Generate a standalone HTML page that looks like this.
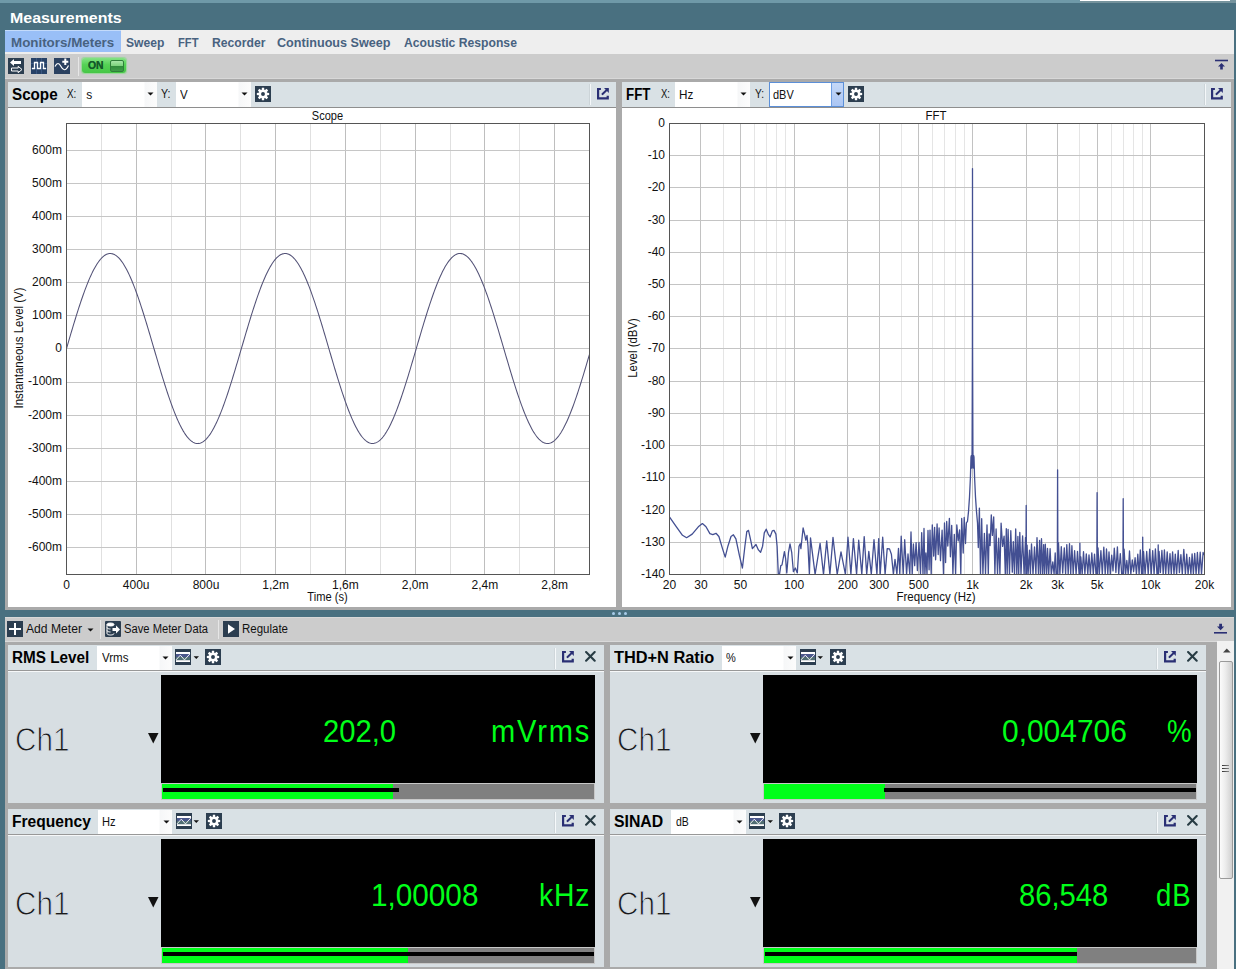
<!DOCTYPE html>
<html><head><meta charset="utf-8"><title>Measurements</title>
<style>
html,body{margin:0;padding:0}
body{width:1236px;height:969px;overflow:hidden;background:#497080;position:relative;font-family:"Liberation Sans",sans-serif}
.b{position:absolute;display:block}
.t{position:absolute;white-space:nowrap;transform-origin:0 50%}
svg text{font-family:"Liberation Sans",sans-serif}
</style></head><body>
<div class="b" style="left:0px;top:0px;width:1080px;height:3px;background:#6f99a8;"></div>
<div class="b" style="left:1080px;top:0px;width:156px;height:3px;background:#75939d;"></div>
<div class="b" style="left:1080px;top:0px;width:150px;height:1px;background:#ffffff;"></div>
<div class="t" style="left:9.70px;top:9.68px;font-size:15.5px;line-height:15.5px;font-weight:bold;color:#fff;transform:scaleX(1.0282);">Measurements</div>
<div class="b" style="left:5px;top:30px;width:1229px;height:24px;background:#eeeeee;"></div>
<div class="b" style="left:5px;top:30px;width:115.5px;height:22px;background:#99bff7;border-top:1px solid #c4dbfb;box-sizing:border-box;"></div>
<div class="t" style="left:10.50px;top:35.67px;font-size:13.5px;line-height:13.5px;font-weight:bold;color:#486280;transform:scaleX(0.9899);">Monitors/Meters</div>
<div class="t" style="left:126.30px;top:35.67px;font-size:13.5px;line-height:13.5px;font-weight:bold;color:#486280;transform:scaleX(0.8979);">Sweep</div>
<div class="t" style="left:177.90px;top:35.67px;font-size:13.5px;line-height:13.5px;font-weight:bold;color:#486280;transform:scaleX(0.8287);">FFT</div>
<div class="t" style="left:211.50px;top:35.67px;font-size:13.5px;line-height:13.5px;font-weight:bold;color:#486280;transform:scaleX(0.9009);">Recorder</div>
<div class="t" style="left:277.40px;top:35.67px;font-size:13.5px;line-height:13.5px;font-weight:bold;color:#486280;transform:scaleX(0.9342);">Continuous Sweep</div>
<div class="t" style="left:404.30px;top:35.67px;font-size:13.5px;line-height:13.5px;font-weight:bold;color:#486280;transform:scaleX(0.9012);">Acoustic Response</div>
<div class="b" style="left:5px;top:54px;width:1229px;height:25px;background:#cccccc;"></div>
<div class="b" style="left:5px;top:78px;width:1229px;height:1px;background:#d8d8d8;"></div>
<svg class="b" style="left:8px;top:58px;" width="16" height="16" viewBox="0 0 16 16"><rect width="16" height="16" fill="#2c3e50"/><path d="M2 4.5 L6 1 L6 3 L13 3 L13 6 L6 6 L6 8 Z" fill="#fff"/><path d="M14 11.5 L10.2 8.3 L10.2 10 L3.5 10 L3.5 13 L10.2 13 L10.2 14.7 Z" fill="none" stroke="#fff" stroke-width="1"/></svg>
<svg class="b" style="left:31px;top:58px;" width="16" height="16" viewBox="0 0 16 16"><rect width="16" height="16" fill="#274166"/><path d="M0 5.5H16M0 10.5H16M5.5 0V16M10.5 0V16" stroke="#3a5680" stroke-width="1" fill="none"/><path d="M1 10.5 H3.5 V4.5 H6.5 V10.5 H9.5 V4.5 H12.5 V10.5 H15" stroke="#fff" stroke-width="1.3" fill="none"/></svg>
<svg class="b" style="left:54px;top:58px;" width="16" height="16" viewBox="0 0 16 16"><rect width="16" height="16" fill="#2b4160"/><path d="M1 8.5 C3 4.5 5 4.5 7 8.5 S 11.5 13.5 14.5 7.5" stroke="#fff" stroke-width="1.2" fill="none"/><path d="M8.3 3.7 H14.3 M11.3 0.6 V6.9" stroke="#fff" stroke-width="2" fill="none"/></svg>
<div class="b" style="left:78px;top:57px;width:1px;height:19px;background:#e6e6e6;"></div>
<div class="b" style="left:82px;top:58px;width:44px;height:15px;border-radius:3px;background:linear-gradient(#84e384,#55d155 45%,#46c646);box-shadow:0 0 1px 0.5px rgba(120,220,120,.6);"></div>
<div class="b" style="left:110px;top:60px;width:14px;height:11.5px;border-radius:2px;background:linear-gradient(#a6e6a6 0%,#7fd37f 45%,#2f8a3a 50%,#3f9d48 100%);border:1px solid #2f7f3a;box-sizing:border-box;"></div>
<div class="t" style="left:88.20px;top:60.31px;font-size:10.5px;line-height:10.5px;font-weight:bold;color:#14592a;transform:scaleX(0.9905);text-shadow:0 0 0.6px #14592a;">ON</div>
<svg class="b" style="left:1215px;top:59px;" width="14" height="12" viewBox="0 0 14 12"><path d="M0 1.5H13" stroke="#2a2f74" stroke-width="1.6"/><path d="M6.5 4 L10 7.5 H7.8 V10.5 H5.2 V7.5 H3 Z" fill="#2a2f74"/></svg>
<div class="b" style="left:5px;top:79px;width:1229px;height:531px;background:#aaaaaa;"></div>
<div class="b" style="left:8px;top:82px;width:608px;height:25px;background:#d9e1e5;"></div>
<div class="b" style="left:8px;top:107px;width:608px;height:500px;background:#ffffff;border-top:1px solid #8e8e8e;box-sizing:border-box;"></div>
<div class="t" style="left:12.00px;top:86.66px;font-size:16px;line-height:16.0px;font-weight:bold;color:#000;transform:scaleX(0.9498);">Scope</div>
<div class="t" style="left:67.20px;top:87.84px;font-size:12px;line-height:12.0px;font-weight:normal;color:#111;transform:scaleX(0.8202);">X:</div>
<div class="b" style="left:82px;top:82px;width:74.5px;height:25px;background:linear-gradient(90deg,#fff 0,#fff calc(100% - 13px),#f6f7f8 calc(100% - 12px),#fcfcfc 100%);"></div>
<div class="t" style="left:86.30px;top:88.64px;font-size:12px;line-height:12.0px;font-weight:normal;color:#111;transform:scaleX(1.0000);">s</div>
<svg class="b" style="left:146.75px;top:92.0px;" width="7" height="4" viewBox="0 0 7 4"><path d="M0.5 0.5 H6.5 L3.5 3.5 Z" fill="#111"/></svg>
<div class="t" style="left:161.00px;top:87.84px;font-size:12px;line-height:12.0px;font-weight:normal;color:#111;transform:scaleX(0.8898);">Y:</div>
<div class="b" style="left:176px;top:82px;width:75px;height:25px;background:linear-gradient(90deg,#fff 0,#fff calc(100% - 13px),#f6f7f8 calc(100% - 12px),#fcfcfc 100%);"></div>
<div class="t" style="left:180.00px;top:88.64px;font-size:12px;line-height:12.0px;font-weight:normal;color:#111;transform:scaleX(0.9620);">V</div>
<svg class="b" style="left:241.25px;top:92.0px;" width="7" height="4" viewBox="0 0 7 4"><path d="M0.5 0.5 H6.5 L3.5 3.5 Z" fill="#111"/></svg>
<svg class="b" style="left:255px;top:86px;" width="16" height="16" viewBox="0 0 16 16"><rect width="16" height="16" fill="#2c3e50"/><g transform="translate(8,8)" fill="#fff" shape-rendering="geometricPrecision"><path d="M-1.45 -3.4 L-1.1 -6.15 H1.1 L1.45 -3.4 Z" transform="rotate(0)" /><path d="M-1.45 -3.4 L-1.1 -6.15 H1.1 L1.45 -3.4 Z" transform="rotate(45)" /><path d="M-1.45 -3.4 L-1.1 -6.15 H1.1 L1.45 -3.4 Z" transform="rotate(90)" /><path d="M-1.45 -3.4 L-1.1 -6.15 H1.1 L1.45 -3.4 Z" transform="rotate(135)" /><path d="M-1.45 -3.4 L-1.1 -6.15 H1.1 L1.45 -3.4 Z" transform="rotate(180)" /><path d="M-1.45 -3.4 L-1.1 -6.15 H1.1 L1.45 -3.4 Z" transform="rotate(225)" /><path d="M-1.45 -3.4 L-1.1 -6.15 H1.1 L1.45 -3.4 Z" transform="rotate(270)" /><path d="M-1.45 -3.4 L-1.1 -6.15 H1.1 L1.45 -3.4 Z" transform="rotate(315)" /><circle r="4.25"/><circle r="1.95" fill="#2c3e50"/></g></svg>
<div class="b" style="left:589px;top:84px;width:1px;height:21px;background:#ccd4d8;"></div>
<div class="b" style="left:590px;top:84px;width:1px;height:21px;background:#f4f7f9;"></div>
<svg class="b" style="left:597px;top:88px;" width="12.7" height="12.7" viewBox="0 0 13 13"><path d="M4 1 H1.1 V10.6 H11 V8" fill="none" stroke="#2a2f74" stroke-width="2.3"/><path d="M7.2 0 H12.1 V5.2 Z" fill="#2a2f74"/><path d="M5.7 6.2 L10.6 1.4" stroke="#2a2f74" stroke-width="2.1" stroke-linecap="round"/></svg>
<div class="b" style="left:622px;top:82px;width:609px;height:25px;background:#d9e1e5;"></div>
<div class="b" style="left:622px;top:107px;width:609px;height:500px;background:#ffffff;border-top:1px solid #8e8e8e;box-sizing:border-box;"></div>
<div class="t" style="left:626.00px;top:86.66px;font-size:16px;line-height:16.0px;font-weight:bold;color:#000;transform:scaleX(0.8323);">FFT</div>
<div class="t" style="left:660.60px;top:87.84px;font-size:12px;line-height:12.0px;font-weight:normal;color:#111;transform:scaleX(0.7938);">X:</div>
<div class="b" style="left:675px;top:82px;width:75px;height:25px;background:linear-gradient(90deg,#fff 0,#fff calc(100% - 13px),#f6f7f8 calc(100% - 12px),#fcfcfc 100%);"></div>
<div class="t" style="left:679.20px;top:88.64px;font-size:12px;line-height:12.0px;font-weight:normal;color:#111;transform:scaleX(0.9750);">Hz</div>
<svg class="b" style="left:740.25px;top:92.0px;" width="7" height="4" viewBox="0 0 7 4"><path d="M0.5 0.5 H6.5 L3.5 3.5 Z" fill="#111"/></svg>
<div class="t" style="left:754.50px;top:87.84px;font-size:12px;line-height:12.0px;font-weight:normal;color:#111;transform:scaleX(0.8430);">Y:</div>
<div class="b" style="left:769px;top:82px;width:75px;height:24.599999999999994px;background:#fff;border:1px solid #5b8fd8;box-sizing:border-box;"></div>
<div class="b" style="left:831px;top:83px;width:12px;height:22.599999999999994px;background:linear-gradient(#c4d8f8,#abc6f4);border-left:1px solid #6f9fe3;box-sizing:border-box;"></div>
<div class="t" style="left:773.30px;top:88.64px;font-size:12px;line-height:12.0px;font-weight:normal;color:#111;transform:scaleX(0.9126);">dBV</div>
<svg class="b" style="left:834.5px;top:91.8px;" width="7" height="4" viewBox="0 0 7 4"><path d="M0.5 0.5 H6.5 L3.5 3.5 Z" fill="#111"/></svg>
<svg class="b" style="left:848px;top:86px;" width="16" height="16" viewBox="0 0 16 16"><rect width="16" height="16" fill="#2c3e50"/><g transform="translate(8,8)" fill="#fff" shape-rendering="geometricPrecision"><path d="M-1.45 -3.4 L-1.1 -6.15 H1.1 L1.45 -3.4 Z" transform="rotate(0)" /><path d="M-1.45 -3.4 L-1.1 -6.15 H1.1 L1.45 -3.4 Z" transform="rotate(45)" /><path d="M-1.45 -3.4 L-1.1 -6.15 H1.1 L1.45 -3.4 Z" transform="rotate(90)" /><path d="M-1.45 -3.4 L-1.1 -6.15 H1.1 L1.45 -3.4 Z" transform="rotate(135)" /><path d="M-1.45 -3.4 L-1.1 -6.15 H1.1 L1.45 -3.4 Z" transform="rotate(180)" /><path d="M-1.45 -3.4 L-1.1 -6.15 H1.1 L1.45 -3.4 Z" transform="rotate(225)" /><path d="M-1.45 -3.4 L-1.1 -6.15 H1.1 L1.45 -3.4 Z" transform="rotate(270)" /><path d="M-1.45 -3.4 L-1.1 -6.15 H1.1 L1.45 -3.4 Z" transform="rotate(315)" /><circle r="4.25"/><circle r="1.95" fill="#2c3e50"/></g></svg>
<div class="b" style="left:1204px;top:84px;width:1px;height:21px;background:#ccd4d8;"></div>
<div class="b" style="left:1205px;top:84px;width:1px;height:21px;background:#f4f7f9;"></div>
<svg class="b" style="left:1211px;top:88px;" width="12.7" height="12.7" viewBox="0 0 13 13"><path d="M4 1 H1.1 V10.6 H11 V8" fill="none" stroke="#2a2f74" stroke-width="2.3"/><path d="M7.2 0 H12.1 V5.2 Z" fill="#2a2f74"/><path d="M5.7 6.2 L10.6 1.4" stroke="#2a2f74" stroke-width="2.1" stroke-linecap="round"/></svg>
<svg class="b" style="left:0;top:0" width="620" height="607" viewBox="0 0 620 607" shape-rendering="crispEdges"><rect x="66.5" y="123.5" width="523.0" height="451.0" fill="#fff"/><path d="M101.5 123.5V574.5" stroke="#e0e0e0" stroke-width="1"/><path d="M136.5 123.5V574.5" stroke="#bebebe" stroke-width="1"/><path d="M171.5 123.5V574.5" stroke="#e0e0e0" stroke-width="1"/><path d="M205.5 123.5V574.5" stroke="#bebebe" stroke-width="1"/><path d="M240.5 123.5V574.5" stroke="#e0e0e0" stroke-width="1"/><path d="M275.5 123.5V574.5" stroke="#bebebe" stroke-width="1"/><path d="M310.5 123.5V574.5" stroke="#e0e0e0" stroke-width="1"/><path d="M345.5 123.5V574.5" stroke="#bebebe" stroke-width="1"/><path d="M380.5 123.5V574.5" stroke="#e0e0e0" stroke-width="1"/><path d="M415.5 123.5V574.5" stroke="#bebebe" stroke-width="1"/><path d="M450.5 123.5V574.5" stroke="#e0e0e0" stroke-width="1"/><path d="M484.5 123.5V574.5" stroke="#bebebe" stroke-width="1"/><path d="M519.5 123.5V574.5" stroke="#e0e0e0" stroke-width="1"/><path d="M554.5 123.5V574.5" stroke="#bebebe" stroke-width="1"/><path d="M66.5 547.5H589.5" stroke="#c6c6c6" stroke-width="1"/><path d="M66.5 514.5H589.5" stroke="#c6c6c6" stroke-width="1"/><path d="M66.5 481.5H589.5" stroke="#c6c6c6" stroke-width="1"/><path d="M66.5 448.5H589.5" stroke="#c6c6c6" stroke-width="1"/><path d="M66.5 415.5H589.5" stroke="#c6c6c6" stroke-width="1"/><path d="M66.5 382.5H589.5" stroke="#c6c6c6" stroke-width="1"/><path d="M66.5 348.5H589.5" stroke="#c6c6c6" stroke-width="1"/><path d="M66.5 315.5H589.5" stroke="#c6c6c6" stroke-width="1"/><path d="M66.5 282.5H589.5" stroke="#c6c6c6" stroke-width="1"/><path d="M66.5 249.5H589.5" stroke="#c6c6c6" stroke-width="1"/><path d="M66.5 216.5H589.5" stroke="#c6c6c6" stroke-width="1"/><path d="M66.5 183.5H589.5" stroke="#c6c6c6" stroke-width="1"/><path d="M66.5 150.5H589.5" stroke="#c6c6c6" stroke-width="1"/><polyline points="66.50,348.50 67.37,345.53 68.24,342.55 69.11,339.59 69.99,336.63 70.86,333.69 71.73,330.76 72.60,327.84 73.47,324.95 74.34,322.08 75.22,319.24 76.09,316.42 76.96,313.64 77.83,310.89 78.70,308.17 79.58,305.50 80.45,302.87 81.32,300.28 82.19,297.74 83.06,295.25 83.93,292.82 84.81,290.43 85.68,288.11 86.55,285.84 87.42,283.64 88.29,281.50 89.16,279.42 90.03,277.41 90.91,275.47 91.78,273.61 92.65,271.81 93.52,270.10 94.39,268.46 95.27,266.89 96.14,265.41 97.01,264.01 97.88,262.69 98.75,261.46 99.62,260.31 100.50,259.24 101.37,258.27 102.24,257.38 103.11,256.59 103.98,255.88 104.85,255.26 105.72,254.74 106.60,254.31 107.47,253.97 108.34,253.72 109.21,253.56 110.08,253.50 110.95,253.53 111.83,253.66 112.70,253.87 113.57,254.19 114.44,254.59 115.31,255.08 116.19,255.67 117.06,256.35 117.93,257.11 118.80,257.97 119.67,258.92 120.54,259.95 121.41,261.07 122.29,262.28 123.16,263.57 124.03,264.95 124.90,266.40 125.77,267.94 126.65,269.55 127.52,271.25 128.39,273.02 129.26,274.86 130.13,276.77 131.00,278.76 131.88,280.81 132.75,282.93 133.62,285.12 134.49,287.37 135.36,289.67 136.23,292.04 137.11,294.46 137.98,296.93 138.85,299.45 139.72,302.02 140.59,304.64 141.46,307.30 142.34,310.00 143.21,312.74 144.08,315.51 144.95,318.32 145.82,321.15 146.69,324.01 147.56,326.90 148.44,329.81 149.31,332.73 150.18,335.67 151.05,338.63 151.92,341.59 152.80,344.56 153.67,347.53 154.54,350.51 155.41,353.48 156.28,356.45 157.15,359.41 158.03,362.36 158.90,365.29 159.77,368.21 160.64,371.11 161.51,373.99 162.38,376.84 163.25,379.67 164.13,382.46 165.00,385.22 165.87,387.95 166.74,390.64 167.61,393.28 168.49,395.88 169.36,398.44 170.23,400.94 171.10,403.40 171.97,405.80 172.84,408.14 173.72,410.43 174.59,412.65 175.46,414.82 176.33,416.91 177.20,418.94 178.07,420.90 178.94,422.79 179.82,424.61 180.69,426.35 181.56,428.02 182.43,429.61 183.30,431.12 184.18,432.55 185.05,433.89 185.92,435.15 186.79,436.33 187.66,437.42 188.53,438.42 189.41,439.34 190.28,440.16 191.15,440.90 192.02,441.55 192.89,442.10 193.76,442.56 194.63,442.93 195.51,443.21 196.38,443.40 197.25,443.49 198.12,443.49 198.99,443.39 199.87,443.21 200.74,442.93 201.61,442.55 202.48,442.09 203.35,441.53 204.22,440.88 205.09,440.14 205.97,439.32 206.84,438.40 207.71,437.39 208.58,436.30 209.45,435.12 210.33,433.86 211.20,432.51 212.07,431.08 212.94,429.57 213.81,427.98 214.68,426.31 215.56,424.57 216.43,422.75 217.30,420.86 218.17,418.89 219.04,416.86 219.91,414.76 220.78,412.60 221.66,410.37 222.53,408.08 223.40,405.74 224.27,403.34 225.14,400.88 226.02,398.37 226.89,395.82 227.76,393.22 228.63,390.57 229.50,387.88 230.37,385.16 231.25,382.39 232.12,379.60 232.99,376.77 233.86,373.92 234.73,371.04 235.60,368.14 236.47,365.22 237.35,362.28 238.22,359.33 239.09,356.37 239.96,353.41 240.83,350.43 241.71,347.46 242.58,344.49 243.45,341.52 244.32,338.55 245.19,335.60 246.06,332.66 246.94,329.73 247.81,326.83 248.68,323.94 249.55,321.08 250.42,318.25 251.29,315.44 252.17,312.67 253.04,309.93 253.91,307.23 254.78,304.57 255.65,301.96 256.52,299.39 257.39,296.87 258.27,294.40 259.14,291.98 260.01,289.61 260.88,287.31 261.75,285.06 262.62,282.88 263.50,280.76 264.37,278.71 265.24,276.73 266.11,274.81 266.98,272.97 267.86,271.20 268.73,269.51 269.60,267.90 270.47,266.36 271.34,264.91 272.21,263.54 273.09,262.25 273.96,261.04 274.83,259.93 275.70,258.89 276.57,257.95 277.44,257.09 278.31,256.33 279.19,255.65 280.06,255.07 280.93,254.58 281.80,254.18 282.67,253.87 283.55,253.65 284.42,253.53 285.29,253.50 286.16,253.57 287.03,253.72 287.90,253.97 288.77,254.32 289.65,254.75 290.52,255.28 291.39,255.90 292.26,256.61 293.13,257.40 294.00,258.29 294.88,259.27 295.75,260.33 296.62,261.49 297.49,262.72 298.36,264.04 299.24,265.45 300.11,266.93 300.98,268.49 301.85,270.14 302.72,271.86 303.59,273.65 304.47,275.52 305.34,277.46 306.21,279.47 307.08,281.55 307.95,283.69 308.82,285.90 309.70,288.17 310.57,290.49 311.44,292.88 312.31,295.32 313.18,297.81 314.05,300.35 314.93,302.93 315.80,305.57 316.67,308.24 317.54,310.95 318.41,313.70 319.28,316.49 320.15,319.31 321.03,322.15 321.90,325.02 322.77,327.91 323.64,330.83 324.51,333.76 325.38,336.71 326.26,339.66 327.13,342.63 328.00,345.60 328.87,348.57 329.74,351.55 330.62,354.52 331.49,357.49 332.36,360.44 333.23,363.39 334.10,366.32 334.97,369.23 335.85,372.12 336.72,374.99 337.59,377.83 338.46,380.65 339.33,383.43 340.20,386.18 341.07,388.89 341.95,391.57 342.82,394.20 343.69,396.78 344.56,399.32 345.43,401.81 346.31,404.24 347.18,406.62 348.05,408.95 348.92,411.21 349.79,413.42 350.66,415.56 351.54,417.63 352.41,419.64 353.28,421.57 354.15,423.44 355.02,425.23 355.89,426.95 356.76,428.58 357.64,430.15 358.51,431.63 359.38,433.03 360.25,434.34 361.12,435.57 362.00,436.72 362.87,437.78 363.74,438.75 364.61,439.64 365.48,440.43 366.35,441.14 367.23,441.75 368.10,442.27 368.97,442.70 369.84,443.04 370.71,443.29 371.58,443.44 372.45,443.50 373.33,443.47 374.20,443.34 375.07,443.12 375.94,442.81 376.81,442.40 377.69,441.90 378.56,441.32 379.43,440.64 380.30,439.87 381.17,439.01 382.04,438.06 382.92,437.02 383.79,435.90 384.66,434.69 385.53,433.40 386.40,432.02 387.27,430.56 388.15,429.02 389.02,427.40 389.89,425.71 390.76,423.94 391.63,422.09 392.50,420.18 393.38,418.19 394.25,416.13 395.12,414.01 395.99,411.83 396.86,409.58 397.73,407.27 398.61,404.90 399.48,402.48 400.35,400.01 401.22,397.48 402.09,394.91 402.96,392.29 403.84,389.63 404.71,386.93 405.58,384.19 406.45,381.42 407.32,378.61 408.19,375.78 409.06,372.91 409.94,370.03 410.81,367.12 411.68,364.19 412.55,361.25 413.42,358.30 414.30,355.34 415.17,352.37 416.04,349.39 416.91,346.42 417.78,343.45 418.65,340.48 419.53,337.52 420.40,334.57 421.27,331.63 422.14,328.72 423.01,325.82 423.88,322.94 424.75,320.09 425.63,317.26 426.50,314.47 427.37,311.71 428.24,308.98 429.11,306.30 429.99,303.65 430.86,301.05 431.73,298.50 432.60,296.00 433.47,293.54 434.34,291.14 435.22,288.80 436.09,286.52 436.96,284.29 437.83,282.13 438.70,280.04 439.57,278.01 440.44,276.05 441.32,274.16 442.19,272.34 443.06,270.60 443.93,268.94 444.80,267.35 445.68,265.85 446.55,264.42 447.42,263.08 448.29,261.82 449.16,260.64 450.03,259.55 450.91,258.55 451.78,257.64 452.65,256.82 453.52,256.08 454.39,255.44 455.26,254.89 456.13,254.43 457.01,254.06 457.88,253.78 458.75,253.60 459.62,253.51 460.49,253.51 461.37,253.61 462.24,253.80 463.11,254.08 463.98,254.46 464.85,254.92 465.72,255.48 466.60,256.13 467.47,256.87 468.34,257.71 469.21,258.62 470.08,259.63 470.95,260.73 471.82,261.91 472.70,263.17 473.57,264.52 474.44,265.96 475.31,267.47 476.18,269.06 477.06,270.73 477.93,272.48 478.80,274.30 479.67,276.19 480.54,278.16 481.41,280.19 482.29,282.29 483.16,284.46 484.03,286.68 484.90,288.97 485.77,291.32 486.64,293.72 487.52,296.18 488.39,298.69 489.26,301.25 490.13,303.85 491.00,306.50 491.87,309.19 492.75,311.91 493.62,314.68 494.49,317.47 495.36,320.30 496.23,323.15 497.10,326.03 497.98,328.93 498.85,331.85 499.72,334.79 500.59,337.74 501.46,340.70 502.33,343.67 503.21,346.64 504.08,349.61 504.95,352.59 505.82,355.56 506.69,358.52 507.56,361.47 508.44,364.41 509.31,367.34 510.18,370.24 511.05,373.13 511.92,375.99 512.79,378.82 513.66,381.63 514.54,384.40 515.41,387.13 516.28,389.83 517.15,392.49 518.02,395.11 518.89,397.67 519.77,400.20 520.64,402.67 521.51,405.08 522.38,407.44 523.25,409.75 524.12,411.99 525.00,414.17 525.87,416.29 526.74,418.34 527.61,420.32 528.48,422.23 529.36,424.07 530.23,425.84 531.10,427.53 531.97,429.14 532.84,430.67 533.71,432.12 534.59,433.50 535.46,434.78 536.33,435.98 537.20,437.10 538.07,438.13 538.94,439.07 539.82,439.93 540.69,440.69 541.56,441.36 542.43,441.94 543.30,442.43 544.17,442.83 545.05,443.14 545.92,443.35 546.79,443.47 547.66,443.50 548.53,443.43 549.40,443.27 550.28,443.02 551.15,442.67 552.02,442.24 552.89,441.71 553.76,441.09 554.63,440.38 555.50,439.57 556.38,438.68 557.25,437.70 558.12,436.64 558.99,435.48 559.86,434.25 560.74,432.92 561.61,431.52 562.48,430.03 563.35,428.47 564.22,426.82 565.09,425.10 565.97,423.30 566.84,421.43 567.71,419.49 568.58,417.48 569.45,415.40 570.32,413.25 571.19,411.05 572.07,408.78 572.94,406.45 573.81,404.06 574.68,401.62 575.55,399.13 576.42,396.59 577.30,394.00 578.17,391.37 579.04,388.69 579.91,385.98 580.78,383.23 581.65,380.44 582.53,377.62 583.40,374.78 584.27,371.91 585.14,369.01 586.01,366.10 586.88,363.17 587.76,360.22 588.63,357.26 589.50,354.30" fill="none" stroke="#525176" stroke-width="1.05" shape-rendering="geometricPrecision"/><rect x="66.5" y="123.5" width="523.0" height="451.0" fill="none" stroke="#555" stroke-width="1"/><text x="62" y="550.8" text-anchor="end" font-family="Liberation Sans, sans-serif" font-size="12" fill="#111">-600m</text><text x="62" y="517.7" text-anchor="end" font-family="Liberation Sans, sans-serif" font-size="12" fill="#111">-500m</text><text x="62" y="484.7" text-anchor="end" font-family="Liberation Sans, sans-serif" font-size="12" fill="#111">-400m</text><text x="62" y="451.6" text-anchor="end" font-family="Liberation Sans, sans-serif" font-size="12" fill="#111">-300m</text><text x="62" y="418.5" text-anchor="end" font-family="Liberation Sans, sans-serif" font-size="12" fill="#111">-200m</text><text x="62" y="385.4" text-anchor="end" font-family="Liberation Sans, sans-serif" font-size="12" fill="#111">-100m</text><text x="62" y="352.3" text-anchor="end" font-family="Liberation Sans, sans-serif" font-size="12" fill="#111">0</text><text x="62" y="319.3" text-anchor="end" font-family="Liberation Sans, sans-serif" font-size="12" fill="#111">100m</text><text x="62" y="286.2" text-anchor="end" font-family="Liberation Sans, sans-serif" font-size="12" fill="#111">200m</text><text x="62" y="253.1" text-anchor="end" font-family="Liberation Sans, sans-serif" font-size="12" fill="#111">300m</text><text x="62" y="220.0" text-anchor="end" font-family="Liberation Sans, sans-serif" font-size="12" fill="#111">400m</text><text x="62" y="187.0" text-anchor="end" font-family="Liberation Sans, sans-serif" font-size="12" fill="#111">500m</text><text x="62" y="153.9" text-anchor="end" font-family="Liberation Sans, sans-serif" font-size="12" fill="#111">600m</text><text x="66.5" y="589" text-anchor="middle" font-family="Liberation Sans, sans-serif" font-size="12" fill="#111">0</text><text x="136.2" y="589" text-anchor="middle" font-family="Liberation Sans, sans-serif" font-size="12" fill="#111">400u</text><text x="206.0" y="589" text-anchor="middle" font-family="Liberation Sans, sans-serif" font-size="12" fill="#111">800u</text><text x="275.7" y="589" text-anchor="middle" font-family="Liberation Sans, sans-serif" font-size="12" fill="#111">1,2m</text><text x="345.4" y="589" text-anchor="middle" font-family="Liberation Sans, sans-serif" font-size="12" fill="#111">1,6m</text><text x="415.2" y="589" text-anchor="middle" font-family="Liberation Sans, sans-serif" font-size="12" fill="#111">2,0m</text><text x="484.9" y="589" text-anchor="middle" font-family="Liberation Sans, sans-serif" font-size="12" fill="#111">2,4m</text><text x="554.6" y="589" text-anchor="middle" font-family="Liberation Sans, sans-serif" font-size="12" fill="#111">2,8m</text><text x="327.5" y="120" text-anchor="middle" textLength="31.3" lengthAdjust="spacingAndGlyphs" font-family="Liberation Sans, sans-serif" font-size="12" fill="#111">Scope</text><text x="327.5" y="601" text-anchor="middle" textLength="40.3" lengthAdjust="spacingAndGlyphs" font-family="Liberation Sans, sans-serif" font-size="12" fill="#111">Time (s)</text><text transform="translate(23,348) rotate(-90)" text-anchor="middle" textLength="121" lengthAdjust="spacingAndGlyphs" font-family="Liberation Sans, sans-serif" font-size="12" fill="#111">Instantaneous Level (V)</text></svg>
<svg class="b" style="left:0;top:0" width="1236" height="607" viewBox="0 0 1236 607" shape-rendering="crispEdges"><rect x="669.5" y="123.5" width="535.0" height="451.0" fill="#fff"/><path d="M700.5 123.5V574.5" stroke="#c2c2c2" stroke-width="1"/><path d="M723.5 123.5V574.5" stroke="#e5e5e5" stroke-width="1"/><path d="M740.5 123.5V574.5" stroke="#c2c2c2" stroke-width="1"/><path d="M754.5 123.5V574.5" stroke="#e5e5e5" stroke-width="1"/><path d="M766.5 123.5V574.5" stroke="#e5e5e5" stroke-width="1"/><path d="M776.5 123.5V574.5" stroke="#e5e5e5" stroke-width="1"/><path d="M785.5 123.5V574.5" stroke="#e5e5e5" stroke-width="1"/><path d="M794.5 123.5V574.5" stroke="#c2c2c2" stroke-width="1"/><path d="M847.5 123.5V574.5" stroke="#c2c2c2" stroke-width="1"/><path d="M879.5 123.5V574.5" stroke="#c2c2c2" stroke-width="1"/><path d="M901.5 123.5V574.5" stroke="#e5e5e5" stroke-width="1"/><path d="M918.5 123.5V574.5" stroke="#c2c2c2" stroke-width="1"/><path d="M932.5 123.5V574.5" stroke="#e5e5e5" stroke-width="1"/><path d="M944.5 123.5V574.5" stroke="#e5e5e5" stroke-width="1"/><path d="M955.5 123.5V574.5" stroke="#e5e5e5" stroke-width="1"/><path d="M964.5 123.5V574.5" stroke="#e5e5e5" stroke-width="1"/><path d="M972.5 123.5V574.5" stroke="#c2c2c2" stroke-width="1"/><path d="M1026.5 123.5V574.5" stroke="#c2c2c2" stroke-width="1"/><path d="M1057.5 123.5V574.5" stroke="#c2c2c2" stroke-width="1"/><path d="M1079.5 123.5V574.5" stroke="#e5e5e5" stroke-width="1"/><path d="M1097.5 123.5V574.5" stroke="#c2c2c2" stroke-width="1"/><path d="M1111.5 123.5V574.5" stroke="#e5e5e5" stroke-width="1"/><path d="M1123.5 123.5V574.5" stroke="#e5e5e5" stroke-width="1"/><path d="M1133.5 123.5V574.5" stroke="#e5e5e5" stroke-width="1"/><path d="M1142.5 123.5V574.5" stroke="#e5e5e5" stroke-width="1"/><path d="M1150.5 123.5V574.5" stroke="#c2c2c2" stroke-width="1"/><path d="M669.5 155.5H1204.5" stroke="#c4c4c4" stroke-width="1"/><path d="M669.5 187.5H1204.5" stroke="#c4c4c4" stroke-width="1"/><path d="M669.5 220.5H1204.5" stroke="#c4c4c4" stroke-width="1"/><path d="M669.5 252.5H1204.5" stroke="#c4c4c4" stroke-width="1"/><path d="M669.5 284.5H1204.5" stroke="#c4c4c4" stroke-width="1"/><path d="M669.5 316.5H1204.5" stroke="#c4c4c4" stroke-width="1"/><path d="M669.5 348.5H1204.5" stroke="#c4c4c4" stroke-width="1"/><path d="M669.5 381.5H1204.5" stroke="#c4c4c4" stroke-width="1"/><path d="M669.5 413.5H1204.5" stroke="#c4c4c4" stroke-width="1"/><path d="M669.5 445.5H1204.5" stroke="#c4c4c4" stroke-width="1"/><path d="M669.5 477.5H1204.5" stroke="#c4c4c4" stroke-width="1"/><path d="M669.5 510.5H1204.5" stroke="#c4c4c4" stroke-width="1"/><path d="M669.5 542.5H1204.5" stroke="#c4c4c4" stroke-width="1"/><polyline points="669.6,517.1 676.4,526.8 682.5,535.3 686.6,537.7 692.2,534.1 698.3,526.8 702.4,523.6 706.0,526.8 709.9,533.6 712.8,534.6 716.0,533.3 718.9,536.5 722.5,548.6 725.2,557.1 727.9,546.2 731.0,536.5 733.4,534.8 735.9,538.9 739.5,555.9 742.4,568.0 744.9,546.2 746.8,531.6 748.5,530.4 750.4,538.9 752.4,548.6 756.0,544.5 758.4,549.9 760.6,552.3 762.6,546.2 764.3,532.9 766.2,529.2 768.2,534.1 770.1,537.0 772.3,530.9 774.0,530.4 775.9,534.1 777.1,546.2 778.3,574.4 779.5,574.4 780.8,565.6 782.0,565.0 784.4,551.6 785.6,558.3 786.8,573.0 788.5,552.3 790.0,543.8 791.7,552.3 793.4,571.7 795.3,568.0 797.3,572.9 799.0,546.2 800.2,543.8 800.9,548.6 803.1,528.0 804.6,534.1 805.8,540.1 807.0,535.3 808.0,546.2 809.4,574.4 810.5,537.8 815.1,574.4 820.1,543.4 823.5,574.4 826.7,540.9 829.9,574.4 833.0,537.4 837.2,574.4 841.0,551.8 845.4,574.4 848.0,537.2 850.9,574.4 853.4,538.6 856.6,574.4 858.7,540.2 861.8,574.4 864.2,536.6 866.7,574.4 868.8,551.4 871.3,574.4 874.0,539.6 876.9,574.4 878.7,538.6 880.2,574.4 882.7,537.2 885.1,574.4 887.2,548.6 889.5,548.9 891.4,554.2 893.4,574.4 895.0,559.4 896.9,574.4 898.5,548.4 899.8,574.4 901.2,536.2 903.2,574.4 904.7,539.7 906.6,574.4 908.0,554.0 909.8,574.4 911.0,531.9 912.2,574.4 913.4,544.0 914.7,565.7 916.1,542.6 917.4,570.5 919.0,542.4 920.5,574.4 921.7,532.6 923.0,574.4 924.0,528.5 924.9,574.4 925.9,553.0 927.0,574.4 928.0,530.5 929.1,569.8 930.0,530.1 931.2,574.4 932.3,524.8 933.7,556.1 934.6,527.3 935.6,559.8 937.1,523.9 938.2,554.6 939.1,528.0 940.5,560.7 942.1,530.2 943.5,574.4 944.5,523.0 945.6,562.6 946.7,521.5 947.8,546.0 949.4,518.3 950.4,556.8 951.7,525.3 952.9,574.4 954.3,534.3 955.6,574.4 956.8,524.8 958.2,540.8 959.6,529.9 960.8,574.4 961.7,518.4 963.2,553.0 964.2,517.5 965.5,543.5 966.4,522.8 967.5,521.3 968.5,511.6 969.5,497.1 970.4,477.8 971.0,456.9 971.5,455.3 971.8,468.1 972.1,448.8 972.4,348.9 972.5,168.6 972.6,348.9 972.9,448.8 973.2,468.1 973.5,455.3 974.0,456.9 974.6,477.8 975.5,497.1 976.5,511.6 977.5,522.9 978.3,547.5 979.4,508.1 980.5,574.4 981.7,518.7 982.9,574.4 984.4,533.3 985.5,574.4 987.0,524.8 988.3,574.4 989.1,533.9 990.1,545.5 991.3,514.8 992.4,535.4 993.7,516.8 994.9,574.4 996.1,528.9 997.5,574.4 998.7,538.2 999.9,574.4 1001.1,523.1 1002.6,546.4 1004.1,536.1 1005.3,574.4 1006.3,528.6 1007.2,574.4 1008.1,529.4 1009.5,574.4 1010.8,530.7 1012.3,572.2 1013.3,541.6 1014.5,574.4 1015.7,528.9 1016.8,574.4 1017.9,536.5 1018.7,574.4 1019.8,532.4 1021.0,574.4 1022.6,535.8 1024.1,574.4 1025.5,537.4 1025.9,574.4 1026.2,505.5 1026.5,574.4 1027.1,545.2 1028.1,574.4 1029.5,550.1 1030.4,574.4 1031.5,543.8 1033.0,574.4 1034.5,547.0 1035.9,574.4 1037.0,537.6 1038.5,574.4 1039.6,540.5 1040.5,574.4 1041.5,538.7 1042.6,574.4 1043.6,544.6 1044.5,574.4 1045.3,544.1 1046.6,574.4 1047.5,548.3 1048.7,574.4 1050.1,548.7 1051.3,574.4 1052.8,561.9 1054.1,574.4 1055.2,553.0 1056.1,574.4 1057.3,574.4 1057.6,469.8 1057.9,574.4 1058.5,542.9 1059.9,574.4 1061.3,546.6 1062.7,573.1 1064.3,547.8 1065.6,574.4 1066.8,544.6 1068.2,574.4 1069.5,543.6 1070.7,574.4 1071.9,545.7 1073.2,574.4 1074.6,550.7 1076.1,574.4 1077.5,551.4 1079.1,574.4 1079.6,574.4 1079.9,543.2 1080.2,574.4 1080.8,556.8 1082.2,574.4 1083.5,551.7 1084.9,574.0 1086.3,553.9 1087.8,574.4 1089.0,554.9 1090.4,574.4 1091.8,552.9 1093.3,574.4 1094.5,554.1 1096.0,574.4 1096.8,574.4 1097.1,492.6 1097.4,574.4 1098.0,547.8 1099.3,574.4 1100.9,550.6 1102.3,574.4 1103.8,547.1 1105.2,574.4 1106.5,549.0 1107.8,574.4 1109.0,551.9 1110.3,574.4 1111.7,555.2 1113.0,570.9 1114.3,548.2 1115.9,572.5 1117.4,546.9 1118.7,574.4 1120.3,553.6 1121.7,574.4 1122.9,574.4 1123.2,498.7 1123.5,574.4 1124.1,549.2 1125.6,574.4 1126.8,560.5 1128.2,574.4 1129.5,551.0 1130.8,574.4 1132.3,560.0 1133.6,571.5 1135.1,557.7 1136.4,574.4 1137.8,554.2 1139.1,574.4 1140.3,550.0 1141.6,574.4 1142.4,574.4 1142.7,537.1 1143.0,574.4 1143.6,551.7 1145.1,574.4 1146.7,551.5 1148.2,574.4 1149.7,549.1 1151.2,574.4 1152.7,550.6 1154.1,574.4 1155.4,548.8 1157.0,574.4 1157.9,574.4 1158.2,544.8 1158.5,574.4 1159.1,551.5 1160.4,572.5 1161.9,550.5 1163.2,574.4 1164.4,549.9 1165.7,574.4 1167.2,551.8 1168.6,574.4 1170.0,553.6 1171.3,574.4 1172.6,551.9 1174.0,574.4 1175.3,554.1 1176.6,574.4 1178.2,550.5 1179.4,572.7 1180.9,554.6 1182.3,574.4 1183.8,549.4 1185.4,574.4 1186.7,554.2 1188.1,574.4 1189.5,557.5 1190.9,574.4 1192.1,553.9 1193.4,574.4 1194.7,553.4 1196.1,574.4 1197.4,552.5 1198.8,574.4 1200.2,552.2 1201.5,574.4 1203.1,552.4 1204.0,555.1" fill="none" stroke="#434f92" stroke-width="1.3" stroke-linejoin="round" shape-rendering="geometricPrecision"/><rect x="669.5" y="123.5" width="535.0" height="451.0" fill="none" stroke="#555" stroke-width="1"/><text x="665" y="127.0" text-anchor="end" font-family="Liberation Sans, sans-serif" font-size="12" fill="#111">0</text><text x="665" y="159.2" text-anchor="end" font-family="Liberation Sans, sans-serif" font-size="12" fill="#111">-10</text><text x="665" y="191.4" text-anchor="end" font-family="Liberation Sans, sans-serif" font-size="12" fill="#111">-20</text><text x="665" y="223.6" text-anchor="end" font-family="Liberation Sans, sans-serif" font-size="12" fill="#111">-30</text><text x="665" y="255.8" text-anchor="end" font-family="Liberation Sans, sans-serif" font-size="12" fill="#111">-40</text><text x="665" y="288.0" text-anchor="end" font-family="Liberation Sans, sans-serif" font-size="12" fill="#111">-50</text><text x="665" y="320.2" text-anchor="end" font-family="Liberation Sans, sans-serif" font-size="12" fill="#111">-60</text><text x="665" y="352.4" text-anchor="end" font-family="Liberation Sans, sans-serif" font-size="12" fill="#111">-70</text><text x="665" y="384.7" text-anchor="end" font-family="Liberation Sans, sans-serif" font-size="12" fill="#111">-80</text><text x="665" y="416.9" text-anchor="end" font-family="Liberation Sans, sans-serif" font-size="12" fill="#111">-90</text><text x="665" y="449.1" text-anchor="end" font-family="Liberation Sans, sans-serif" font-size="12" fill="#111">-100</text><text x="665" y="481.3" text-anchor="end" font-family="Liberation Sans, sans-serif" font-size="12" fill="#111">-110</text><text x="665" y="513.5" text-anchor="end" font-family="Liberation Sans, sans-serif" font-size="12" fill="#111">-120</text><text x="665" y="545.7" text-anchor="end" font-family="Liberation Sans, sans-serif" font-size="12" fill="#111">-130</text><text x="665" y="578.0" text-anchor="end" font-family="Liberation Sans, sans-serif" font-size="12" fill="#111">-140</text><text x="669.5" y="589" text-anchor="middle" font-family="Liberation Sans, sans-serif" font-size="12" fill="#111">20</text><text x="700.9" y="589" text-anchor="middle" font-family="Liberation Sans, sans-serif" font-size="12" fill="#111">30</text><text x="740.5" y="589" text-anchor="middle" font-family="Liberation Sans, sans-serif" font-size="12" fill="#111">50</text><text x="794.1" y="589" text-anchor="middle" font-family="Liberation Sans, sans-serif" font-size="12" fill="#111">100</text><text x="847.8" y="589" text-anchor="middle" font-family="Liberation Sans, sans-serif" font-size="12" fill="#111">200</text><text x="879.2" y="589" text-anchor="middle" font-family="Liberation Sans, sans-serif" font-size="12" fill="#111">300</text><text x="918.8" y="589" text-anchor="middle" font-family="Liberation Sans, sans-serif" font-size="12" fill="#111">500</text><text x="972.5" y="589" text-anchor="middle" font-family="Liberation Sans, sans-serif" font-size="12" fill="#111">1k</text><text x="1026.2" y="589" text-anchor="middle" font-family="Liberation Sans, sans-serif" font-size="12" fill="#111">2k</text><text x="1057.6" y="589" text-anchor="middle" font-family="Liberation Sans, sans-serif" font-size="12" fill="#111">3k</text><text x="1097.1" y="589" text-anchor="middle" font-family="Liberation Sans, sans-serif" font-size="12" fill="#111">5k</text><text x="1150.8" y="589" text-anchor="middle" font-family="Liberation Sans, sans-serif" font-size="12" fill="#111">10k</text><text x="1204.5" y="589" text-anchor="middle" font-family="Liberation Sans, sans-serif" font-size="12" fill="#111">20k</text><text x="936" y="120" text-anchor="middle" textLength="20.9" lengthAdjust="spacingAndGlyphs" font-family="Liberation Sans, sans-serif" font-size="12" fill="#111">FFT</text><text x="936" y="601" text-anchor="middle" textLength="79.1" lengthAdjust="spacingAndGlyphs" font-family="Liberation Sans, sans-serif" font-size="12" fill="#111">Frequency (Hz)</text><text transform="translate(637,348) rotate(-90)" text-anchor="middle" textLength="59.6" lengthAdjust="spacingAndGlyphs" font-family="Liberation Sans, sans-serif" font-size="12" fill="#111">Level (dBV)</text></svg>
<div class="b" style="left:0px;top:610px;width:1236px;height:7px;background:#497080;"></div>
<div class="b" style="left:612px;top:612px;width:3px;height:3px;background:#a8cce9;border-radius:1.5px;"></div>
<div class="b" style="left:618px;top:612px;width:3px;height:3px;background:#a8cce9;border-radius:1.5px;"></div>
<div class="b" style="left:624px;top:612px;width:3px;height:3px;background:#a8cce9;border-radius:1.5px;"></div>
<div class="b" style="left:5px;top:617px;width:1229px;height:25px;background:#cccccc;"></div>
<div class="b" style="left:5px;top:617px;width:1229px;height:1px;background:#d8d8d8;"></div>
<div class="b" style="left:5px;top:641px;width:1229px;height:1px;background:#dadada;"></div>
<svg class="b" style="left:7px;top:621px;" width="16" height="16" viewBox="0 0 16 16"><rect width="16" height="16" fill="#2c3e50"/><path d="M8 2V14M2 8H14" stroke="#fff" stroke-width="2"/></svg>
<div class="t" style="left:26.00px;top:623.34px;font-size:12px;line-height:12.0px;font-weight:normal;color:#111;transform:scaleX(1.0116);">Add Meter</div>
<svg class="b" style="left:86.5px;top:627.5px;" width="7" height="4" viewBox="0 0 7 4"><path d="M0.5 0.5 H6.5 L3.5 3.5 Z" fill="#111"/></svg>
<div class="b" style="left:100px;top:620px;width:1px;height:19px;background:#e6e6e6;"></div>
<svg class="b" style="left:105px;top:621px;" width="16" height="16" viewBox="0 0 16 16"><rect width="16" height="16" rx="1" fill="#2c3e50"/><g fill="none" stroke="#fff" stroke-width="1"><ellipse cx="5.5" cy="3.5" rx="3.5" ry="1.5" fill="#fff"/><path d="M2 3.5V12.5C2 13.5 4 14 5.5 14S9 13.5 9 12.5"/><path d="M2 6.5C2 7.5 4 8 5.5 8M2 9.5C2 10.5 4 11 5.5 11"/></g><path d="M7.5 7H11V4.5L15 8.5L11 12.5V10H7.5Z" fill="#fff"/></svg>
<div class="t" style="left:124.00px;top:623.34px;font-size:12px;line-height:12.0px;font-weight:normal;color:#111;transform:scaleX(0.9330);">Save Meter Data</div>
<div class="b" style="left:218px;top:620px;width:1px;height:19px;background:#e6e6e6;"></div>
<svg class="b" style="left:223px;top:621px;" width="16" height="16" viewBox="0 0 16 16"><rect width="16" height="16" fill="#2c3e50"/><path d="M5 3.2L12 8L5 12.8Z" fill="#fff"/></svg>
<div class="t" style="left:242.00px;top:623.34px;font-size:12px;line-height:12.0px;font-weight:normal;color:#111;transform:scaleX(0.9577);">Regulate</div>
<svg class="b" style="left:1214px;top:623px;" width="14" height="12" viewBox="0 0 14 12"><path d="M0 9.8H13" stroke="#2a2f74" stroke-width="1.6"/><path d="M6.6 7.2 L10.2 3.6 H8 V0.8 H5.2 V3.6 H3 Z" fill="#2a2f74"/></svg>
<div class="b" style="left:5px;top:642px;width:1229px;height:327px;background:#aaaaaa;"></div>
<div class="b" style="left:8px;top:645px;width:596px;height:25px;background:#d9e1e5;"></div>
<div class="b" style="left:8px;top:670px;width:596px;height:133px;background:#d7dee2;"></div>
<div class="b" style="left:8px;top:670px;width:596px;height:1px;background:#989898;"></div>
<div class="b" style="left:8px;top:671px;width:596px;height:1px;background:#f6f8f9;"></div>
<div class="t" style="left:12.00px;top:650.46px;font-size:16px;line-height:16.0px;font-weight:bold;color:#000;transform:scaleX(0.9554);">RMS Level</div>
<div class="b" style="left:97px;top:646px;width:74.69999999999999px;height:24px;background:linear-gradient(90deg,#fff 0,#fff calc(100% - 13px),#f6f7f8 calc(100% - 12px),#fcfcfc 100%);"></div>
<div class="t" style="left:101.50px;top:652.14px;font-size:12px;line-height:12.0px;font-weight:normal;color:#111;transform:scaleX(0.9618);">Vrms</div>
<svg class="b" style="left:161.95px;top:655.5px;" width="7" height="4" viewBox="0 0 7 4"><path d="M0.5 0.5 H6.5 L3.5 3.5 Z" fill="#111"/></svg>
<svg class="b" style="left:175.2px;top:648.9px;" width="16" height="16" viewBox="0 0 16 16"><rect width="16" height="16" fill="#2c3e50"/><rect x="1" y="3" width="14" height="2" fill="#fff"/><rect x="1" y="5" width="14" height="3" fill="#4b588c"/><rect x="1" y="8" width="14" height="3.2" fill="#506e73"/><rect x="1" y="11.2" width="14" height="1.8" fill="#fff"/><path d="M1 10.9 L5.3 6.2 L9.5 10.9 L14.9 4.9" stroke="#fff" stroke-width="0.9" fill="none" shape-rendering="geometricPrecision"/></svg>
<svg class="b" style="left:192.5px;top:655.5px;" width="7" height="4" viewBox="0 0 7 4"><path d="M0.6 0.3 H6 L3.3 3.1 Z" fill="#111"/></svg>
<svg class="b" style="left:205.2px;top:648.9px;" width="16" height="16" viewBox="0 0 16 16"><rect width="16" height="16" fill="#2c3e50"/><g transform="translate(8,8)" fill="#fff" shape-rendering="geometricPrecision"><path d="M-1.45 -3.4 L-1.1 -6.15 H1.1 L1.45 -3.4 Z" transform="rotate(0)" /><path d="M-1.45 -3.4 L-1.1 -6.15 H1.1 L1.45 -3.4 Z" transform="rotate(45)" /><path d="M-1.45 -3.4 L-1.1 -6.15 H1.1 L1.45 -3.4 Z" transform="rotate(90)" /><path d="M-1.45 -3.4 L-1.1 -6.15 H1.1 L1.45 -3.4 Z" transform="rotate(135)" /><path d="M-1.45 -3.4 L-1.1 -6.15 H1.1 L1.45 -3.4 Z" transform="rotate(180)" /><path d="M-1.45 -3.4 L-1.1 -6.15 H1.1 L1.45 -3.4 Z" transform="rotate(225)" /><path d="M-1.45 -3.4 L-1.1 -6.15 H1.1 L1.45 -3.4 Z" transform="rotate(270)" /><path d="M-1.45 -3.4 L-1.1 -6.15 H1.1 L1.45 -3.4 Z" transform="rotate(315)" /><circle r="4.25"/><circle r="1.95" fill="#2c3e50"/></g></svg>
<div class="b" style="left:554px;top:648px;width:1px;height:21px;background:#cfd6da;"></div>
<div class="b" style="left:555px;top:648px;width:1px;height:21px;background:#f6f9fb;"></div>
<svg class="b" style="left:561.8px;top:651px;" width="12.7" height="12.7" viewBox="0 0 13 13"><path d="M4 1 H1.1 V10.6 H11 V8" fill="none" stroke="#2a2f74" stroke-width="2.3"/><path d="M7.2 0 H12.1 V5.2 Z" fill="#2a2f74"/><path d="M5.7 6.2 L10.6 1.4" stroke="#2a2f74" stroke-width="2.1" stroke-linecap="round"/></svg>
<svg class="b" style="left:585.4px;top:651.3px;" width="11" height="11" viewBox="0 0 11 11"><path d="M1.1 1.1L9.7 9.7M9.7 1.1L1.1 9.7" stroke="#283c44" stroke-width="2.1" stroke-linecap="round"/></svg>
<div class="t" style="left:15.00px;top:721.92px;font-size:34px;line-height:34.0px;font-weight:normal;color:#1a1a1a;transform:scaleX(0.8738);-webkit-text-stroke:1px #d7dee2;">Ch1</div>
<svg class="b" style="left:147.5px;top:733px;" width="11" height="11" viewBox="0 0 11 11"><path d="M0 0H10.5L5.25 10.5Z" fill="#111"/></svg>
<div class="b" style="left:160.5px;top:674.8px;width:434.5px;height:125.70000000000005px;background:#000;"></div>
<div class="b" style="left:160.5px;top:782.5px;width:434.5px;height:17.5px;background:#808080;border:1px solid #c8c8c8;box-sizing:border-box;"></div>
<div class="b" style="left:161.5px;top:783.5px;width:231.7px;height:15.5px;background:#00ff19;"></div>
<div class="b" style="left:162.5px;top:788.1px;width:236.5px;height:4.199999999999932px;background:#000;"></div>
<div class="t" style="left:323.30px;top:714.71px;font-size:32px;line-height:32.0px;font-weight:normal;color:#00ff19;transform:scaleX(0.9117);">202,0</div>
<div class="t" style="left:491.00px;top:714.71px;font-size:32px;line-height:32.0px;font-weight:normal;color:#00ff19;transform:scaleX(0.9082);letter-spacing:2px;">mVrms</div>
<div class="b" style="left:610px;top:645px;width:596px;height:25px;background:#d9e1e5;"></div>
<div class="b" style="left:610px;top:670px;width:596px;height:133px;background:#d7dee2;"></div>
<div class="b" style="left:610px;top:670px;width:596px;height:1px;background:#989898;"></div>
<div class="b" style="left:610px;top:671px;width:596px;height:1px;background:#f6f8f9;"></div>
<div class="t" style="left:614.00px;top:650.46px;font-size:16px;line-height:16.0px;font-weight:bold;color:#000;transform:scaleX(1.0211);">THD+N Ratio</div>
<div class="b" style="left:721.7px;top:646px;width:74.70000000000005px;height:24px;background:linear-gradient(90deg,#fff 0,#fff calc(100% - 13px),#f6f7f8 calc(100% - 12px),#fcfcfc 100%);"></div>
<div class="t" style="left:726.20px;top:652.14px;font-size:12px;line-height:12.0px;font-weight:normal;color:#111;transform:scaleX(0.9184);">%</div>
<svg class="b" style="left:786.6500000000001px;top:655.5px;" width="7" height="4" viewBox="0 0 7 4"><path d="M0.5 0.5 H6.5 L3.5 3.5 Z" fill="#111"/></svg>
<svg class="b" style="left:799.9000000000001px;top:648.9px;" width="16" height="16" viewBox="0 0 16 16"><rect width="16" height="16" fill="#2c3e50"/><rect x="1" y="3" width="14" height="2" fill="#fff"/><rect x="1" y="5" width="14" height="3" fill="#4b588c"/><rect x="1" y="8" width="14" height="3.2" fill="#506e73"/><rect x="1" y="11.2" width="14" height="1.8" fill="#fff"/><path d="M1 10.9 L5.3 6.2 L9.5 10.9 L14.9 4.9" stroke="#fff" stroke-width="0.9" fill="none" shape-rendering="geometricPrecision"/></svg>
<svg class="b" style="left:817.2px;top:655.5px;" width="7" height="4" viewBox="0 0 7 4"><path d="M0.6 0.3 H6 L3.3 3.1 Z" fill="#111"/></svg>
<svg class="b" style="left:829.9000000000001px;top:648.9px;" width="16" height="16" viewBox="0 0 16 16"><rect width="16" height="16" fill="#2c3e50"/><g transform="translate(8,8)" fill="#fff" shape-rendering="geometricPrecision"><path d="M-1.45 -3.4 L-1.1 -6.15 H1.1 L1.45 -3.4 Z" transform="rotate(0)" /><path d="M-1.45 -3.4 L-1.1 -6.15 H1.1 L1.45 -3.4 Z" transform="rotate(45)" /><path d="M-1.45 -3.4 L-1.1 -6.15 H1.1 L1.45 -3.4 Z" transform="rotate(90)" /><path d="M-1.45 -3.4 L-1.1 -6.15 H1.1 L1.45 -3.4 Z" transform="rotate(135)" /><path d="M-1.45 -3.4 L-1.1 -6.15 H1.1 L1.45 -3.4 Z" transform="rotate(180)" /><path d="M-1.45 -3.4 L-1.1 -6.15 H1.1 L1.45 -3.4 Z" transform="rotate(225)" /><path d="M-1.45 -3.4 L-1.1 -6.15 H1.1 L1.45 -3.4 Z" transform="rotate(270)" /><path d="M-1.45 -3.4 L-1.1 -6.15 H1.1 L1.45 -3.4 Z" transform="rotate(315)" /><circle r="4.25"/><circle r="1.95" fill="#2c3e50"/></g></svg>
<div class="b" style="left:1156px;top:648px;width:1px;height:21px;background:#cfd6da;"></div>
<div class="b" style="left:1157px;top:648px;width:1px;height:21px;background:#f6f9fb;"></div>
<svg class="b" style="left:1163.8px;top:651px;" width="12.7" height="12.7" viewBox="0 0 13 13"><path d="M4 1 H1.1 V10.6 H11 V8" fill="none" stroke="#2a2f74" stroke-width="2.3"/><path d="M7.2 0 H12.1 V5.2 Z" fill="#2a2f74"/><path d="M5.7 6.2 L10.6 1.4" stroke="#2a2f74" stroke-width="2.1" stroke-linecap="round"/></svg>
<svg class="b" style="left:1187.4px;top:651.3px;" width="11" height="11" viewBox="0 0 11 11"><path d="M1.1 1.1L9.7 9.7M9.7 1.1L1.1 9.7" stroke="#283c44" stroke-width="2.1" stroke-linecap="round"/></svg>
<div class="t" style="left:617.00px;top:721.92px;font-size:34px;line-height:34.0px;font-weight:normal;color:#1a1a1a;transform:scaleX(0.8738);-webkit-text-stroke:1px #d7dee2;">Ch1</div>
<svg class="b" style="left:749.5px;top:733px;" width="11" height="11" viewBox="0 0 11 11"><path d="M0 0H10.5L5.25 10.5Z" fill="#111"/></svg>
<div class="b" style="left:762.5px;top:674.8px;width:434.5px;height:125.70000000000005px;background:#000;"></div>
<div class="b" style="left:762.5px;top:782.5px;width:434.5px;height:17.5px;background:#808080;border:1px solid #c8c8c8;box-sizing:border-box;"></div>
<div class="b" style="left:763.5px;top:783.5px;width:121.29999999999995px;height:15.5px;background:#00ff19;"></div>
<div class="b" style="left:884px;top:788.1px;width:312px;height:4.199999999999932px;background:#000;"></div>
<div class="t" style="left:1002.20px;top:714.71px;font-size:32px;line-height:32.0px;font-weight:normal;color:#00ff19;transform:scaleX(0.9351);">0,004706</div>
<div class="t" style="left:1166.60px;top:714.71px;font-size:32px;line-height:32.0px;font-weight:normal;color:#00ff19;transform:scaleX(0.8645);">%</div>
<div class="b" style="left:8px;top:809px;width:596px;height:25px;background:#d9e1e5;"></div>
<div class="b" style="left:8px;top:834px;width:596px;height:133px;background:#d7dee2;"></div>
<div class="b" style="left:8px;top:834px;width:596px;height:1px;background:#989898;"></div>
<div class="b" style="left:8px;top:835px;width:596px;height:1px;background:#f6f8f9;"></div>
<div class="t" style="left:12.00px;top:814.46px;font-size:16px;line-height:16.0px;font-weight:bold;color:#000;transform:scaleX(0.9740);">Frequency</div>
<div class="b" style="left:97.8px;top:810px;width:74.7px;height:24px;background:linear-gradient(90deg,#fff 0,#fff calc(100% - 13px),#f6f7f8 calc(100% - 12px),#fcfcfc 100%);"></div>
<div class="t" style="left:102.30px;top:816.14px;font-size:12px;line-height:12.0px;font-weight:normal;color:#111;transform:scaleX(0.9273);">Hz</div>
<svg class="b" style="left:162.75px;top:819.5px;" width="7" height="4" viewBox="0 0 7 4"><path d="M0.5 0.5 H6.5 L3.5 3.5 Z" fill="#111"/></svg>
<svg class="b" style="left:176.0px;top:812.9px;" width="16" height="16" viewBox="0 0 16 16"><rect width="16" height="16" fill="#2c3e50"/><rect x="1" y="3" width="14" height="2" fill="#fff"/><rect x="1" y="5" width="14" height="3" fill="#4b588c"/><rect x="1" y="8" width="14" height="3.2" fill="#506e73"/><rect x="1" y="11.2" width="14" height="1.8" fill="#fff"/><path d="M1 10.9 L5.3 6.2 L9.5 10.9 L14.9 4.9" stroke="#fff" stroke-width="0.9" fill="none" shape-rendering="geometricPrecision"/></svg>
<svg class="b" style="left:193.3px;top:819.5px;" width="7" height="4" viewBox="0 0 7 4"><path d="M0.6 0.3 H6 L3.3 3.1 Z" fill="#111"/></svg>
<svg class="b" style="left:206.0px;top:812.9px;" width="16" height="16" viewBox="0 0 16 16"><rect width="16" height="16" fill="#2c3e50"/><g transform="translate(8,8)" fill="#fff" shape-rendering="geometricPrecision"><path d="M-1.45 -3.4 L-1.1 -6.15 H1.1 L1.45 -3.4 Z" transform="rotate(0)" /><path d="M-1.45 -3.4 L-1.1 -6.15 H1.1 L1.45 -3.4 Z" transform="rotate(45)" /><path d="M-1.45 -3.4 L-1.1 -6.15 H1.1 L1.45 -3.4 Z" transform="rotate(90)" /><path d="M-1.45 -3.4 L-1.1 -6.15 H1.1 L1.45 -3.4 Z" transform="rotate(135)" /><path d="M-1.45 -3.4 L-1.1 -6.15 H1.1 L1.45 -3.4 Z" transform="rotate(180)" /><path d="M-1.45 -3.4 L-1.1 -6.15 H1.1 L1.45 -3.4 Z" transform="rotate(225)" /><path d="M-1.45 -3.4 L-1.1 -6.15 H1.1 L1.45 -3.4 Z" transform="rotate(270)" /><path d="M-1.45 -3.4 L-1.1 -6.15 H1.1 L1.45 -3.4 Z" transform="rotate(315)" /><circle r="4.25"/><circle r="1.95" fill="#2c3e50"/></g></svg>
<div class="b" style="left:554px;top:812px;width:1px;height:21px;background:#cfd6da;"></div>
<div class="b" style="left:555px;top:812px;width:1px;height:21px;background:#f6f9fb;"></div>
<svg class="b" style="left:561.8px;top:815px;" width="12.7" height="12.7" viewBox="0 0 13 13"><path d="M4 1 H1.1 V10.6 H11 V8" fill="none" stroke="#2a2f74" stroke-width="2.3"/><path d="M7.2 0 H12.1 V5.2 Z" fill="#2a2f74"/><path d="M5.7 6.2 L10.6 1.4" stroke="#2a2f74" stroke-width="2.1" stroke-linecap="round"/></svg>
<svg class="b" style="left:585.4px;top:815.3px;" width="11" height="11" viewBox="0 0 11 11"><path d="M1.1 1.1L9.7 9.7M9.7 1.1L1.1 9.7" stroke="#283c44" stroke-width="2.1" stroke-linecap="round"/></svg>
<div class="t" style="left:15.00px;top:885.92px;font-size:34px;line-height:34.0px;font-weight:normal;color:#1a1a1a;transform:scaleX(0.8738);-webkit-text-stroke:1px #d7dee2;">Ch1</div>
<svg class="b" style="left:147.5px;top:897px;" width="11" height="11" viewBox="0 0 11 11"><path d="M0 0H10.5L5.25 10.5Z" fill="#111"/></svg>
<div class="b" style="left:160.5px;top:838.8px;width:434.5px;height:125.70000000000005px;background:#000;"></div>
<div class="b" style="left:160.5px;top:946.5px;width:434.5px;height:17.5px;background:#808080;border:1px solid #c8c8c8;box-sizing:border-box;"></div>
<div class="b" style="left:161.5px;top:947.5px;width:246.7px;height:15.5px;background:#00ff19;"></div>
<div class="b" style="left:162.5px;top:952.1px;width:431.5px;height:4.199999999999932px;background:#000;"></div>
<div class="t" style="left:371.20px;top:878.71px;font-size:32px;line-height:32.0px;font-weight:normal;color:#00ff19;transform:scaleX(0.9286);">1,00008</div>
<div class="t" style="left:538.70px;top:878.71px;font-size:32px;line-height:32.0px;font-weight:normal;color:#00ff19;transform:scaleX(0.8843);letter-spacing:1px;">kHz</div>
<div class="b" style="left:610px;top:809px;width:596px;height:25px;background:#d9e1e5;"></div>
<div class="b" style="left:610px;top:834px;width:596px;height:133px;background:#d7dee2;"></div>
<div class="b" style="left:610px;top:834px;width:596px;height:1px;background:#989898;"></div>
<div class="b" style="left:610px;top:835px;width:596px;height:1px;background:#f6f8f9;"></div>
<div class="t" style="left:614.00px;top:814.46px;font-size:16px;line-height:16.0px;font-weight:bold;color:#000;transform:scaleX(0.9883);">SINAD</div>
<div class="b" style="left:671.2px;top:810px;width:74.70000000000005px;height:24px;background:linear-gradient(90deg,#fff 0,#fff calc(100% - 13px),#f6f7f8 calc(100% - 12px),#fcfcfc 100%);"></div>
<div class="t" style="left:675.70px;top:816.14px;font-size:12px;line-height:12.0px;font-weight:normal;color:#111;transform:scaleX(0.8721);">dB</div>
<svg class="b" style="left:736.1500000000001px;top:819.5px;" width="7" height="4" viewBox="0 0 7 4"><path d="M0.5 0.5 H6.5 L3.5 3.5 Z" fill="#111"/></svg>
<svg class="b" style="left:749.4000000000001px;top:812.9px;" width="16" height="16" viewBox="0 0 16 16"><rect width="16" height="16" fill="#2c3e50"/><rect x="1" y="3" width="14" height="2" fill="#fff"/><rect x="1" y="5" width="14" height="3" fill="#4b588c"/><rect x="1" y="8" width="14" height="3.2" fill="#506e73"/><rect x="1" y="11.2" width="14" height="1.8" fill="#fff"/><path d="M1 10.9 L5.3 6.2 L9.5 10.9 L14.9 4.9" stroke="#fff" stroke-width="0.9" fill="none" shape-rendering="geometricPrecision"/></svg>
<svg class="b" style="left:766.7px;top:819.5px;" width="7" height="4" viewBox="0 0 7 4"><path d="M0.6 0.3 H6 L3.3 3.1 Z" fill="#111"/></svg>
<svg class="b" style="left:779.4000000000001px;top:812.9px;" width="16" height="16" viewBox="0 0 16 16"><rect width="16" height="16" fill="#2c3e50"/><g transform="translate(8,8)" fill="#fff" shape-rendering="geometricPrecision"><path d="M-1.45 -3.4 L-1.1 -6.15 H1.1 L1.45 -3.4 Z" transform="rotate(0)" /><path d="M-1.45 -3.4 L-1.1 -6.15 H1.1 L1.45 -3.4 Z" transform="rotate(45)" /><path d="M-1.45 -3.4 L-1.1 -6.15 H1.1 L1.45 -3.4 Z" transform="rotate(90)" /><path d="M-1.45 -3.4 L-1.1 -6.15 H1.1 L1.45 -3.4 Z" transform="rotate(135)" /><path d="M-1.45 -3.4 L-1.1 -6.15 H1.1 L1.45 -3.4 Z" transform="rotate(180)" /><path d="M-1.45 -3.4 L-1.1 -6.15 H1.1 L1.45 -3.4 Z" transform="rotate(225)" /><path d="M-1.45 -3.4 L-1.1 -6.15 H1.1 L1.45 -3.4 Z" transform="rotate(270)" /><path d="M-1.45 -3.4 L-1.1 -6.15 H1.1 L1.45 -3.4 Z" transform="rotate(315)" /><circle r="4.25"/><circle r="1.95" fill="#2c3e50"/></g></svg>
<div class="b" style="left:1156px;top:812px;width:1px;height:21px;background:#cfd6da;"></div>
<div class="b" style="left:1157px;top:812px;width:1px;height:21px;background:#f6f9fb;"></div>
<svg class="b" style="left:1163.8px;top:815px;" width="12.7" height="12.7" viewBox="0 0 13 13"><path d="M4 1 H1.1 V10.6 H11 V8" fill="none" stroke="#2a2f74" stroke-width="2.3"/><path d="M7.2 0 H12.1 V5.2 Z" fill="#2a2f74"/><path d="M5.7 6.2 L10.6 1.4" stroke="#2a2f74" stroke-width="2.1" stroke-linecap="round"/></svg>
<svg class="b" style="left:1187.4px;top:815.3px;" width="11" height="11" viewBox="0 0 11 11"><path d="M1.1 1.1L9.7 9.7M9.7 1.1L1.1 9.7" stroke="#283c44" stroke-width="2.1" stroke-linecap="round"/></svg>
<div class="t" style="left:617.00px;top:885.92px;font-size:34px;line-height:34.0px;font-weight:normal;color:#1a1a1a;transform:scaleX(0.8738);-webkit-text-stroke:1px #d7dee2;">Ch1</div>
<svg class="b" style="left:749.5px;top:897px;" width="11" height="11" viewBox="0 0 11 11"><path d="M0 0H10.5L5.25 10.5Z" fill="#111"/></svg>
<div class="b" style="left:762.5px;top:838.8px;width:434.5px;height:125.70000000000005px;background:#000;"></div>
<div class="b" style="left:762.5px;top:946.5px;width:434.5px;height:17.5px;background:#808080;border:1px solid #c8c8c8;box-sizing:border-box;"></div>
<div class="b" style="left:763.5px;top:947.5px;width:313.5px;height:15.5px;background:#00ff19;"></div>
<div class="b" style="left:764.5px;top:952.1px;width:312.5px;height:4.199999999999932px;background:#000;"></div>
<div class="t" style="left:1018.80px;top:878.71px;font-size:32px;line-height:32.0px;font-weight:normal;color:#00ff19;transform:scaleX(0.9125);">86,548</div>
<div class="t" style="left:1155.50px;top:878.71px;font-size:32px;line-height:32.0px;font-weight:normal;color:#00ff19;transform:scaleX(0.8595);letter-spacing:1px;">dB</div>
<div class="b" style="left:1217px;top:641px;width:17px;height:328px;background:#f1f1f1;"></div>
<svg class="b" style="left:1222.5px;top:648px;" width="8" height="5" viewBox="0 0 8 5"><path d="M0 4.6 L3.8 0.4 L7.6 4.6 Z" fill="#444"/></svg>
<div class="b" style="left:1218.5px;top:660.5px;width:14px;height:218px;border:1px solid #9a9a9a;border-radius:2px;box-sizing:border-box;background:linear-gradient(90deg,#fbfbfb,#ececec 45%,#d0d0d0);"></div>
<div class="b" style="left:1222px;top:765px;width:6.5px;height:1.2000000000000455px;background:linear-gradient(90deg,#333,#888);"></div>
<div class="b" style="left:1222px;top:768px;width:6.5px;height:1.2000000000000455px;background:linear-gradient(90deg,#333,#888);"></div>
<div class="b" style="left:1222px;top:771px;width:6.5px;height:1.2000000000000455px;background:linear-gradient(90deg,#333,#888);"></div>
<div class="b" style="left:1234px;top:3px;width:2px;height:966px;background:#497080;"></div>
<div class="b" style="left:0px;top:3px;width:5px;height:966px;background:#497080;"></div>
</body></html>
